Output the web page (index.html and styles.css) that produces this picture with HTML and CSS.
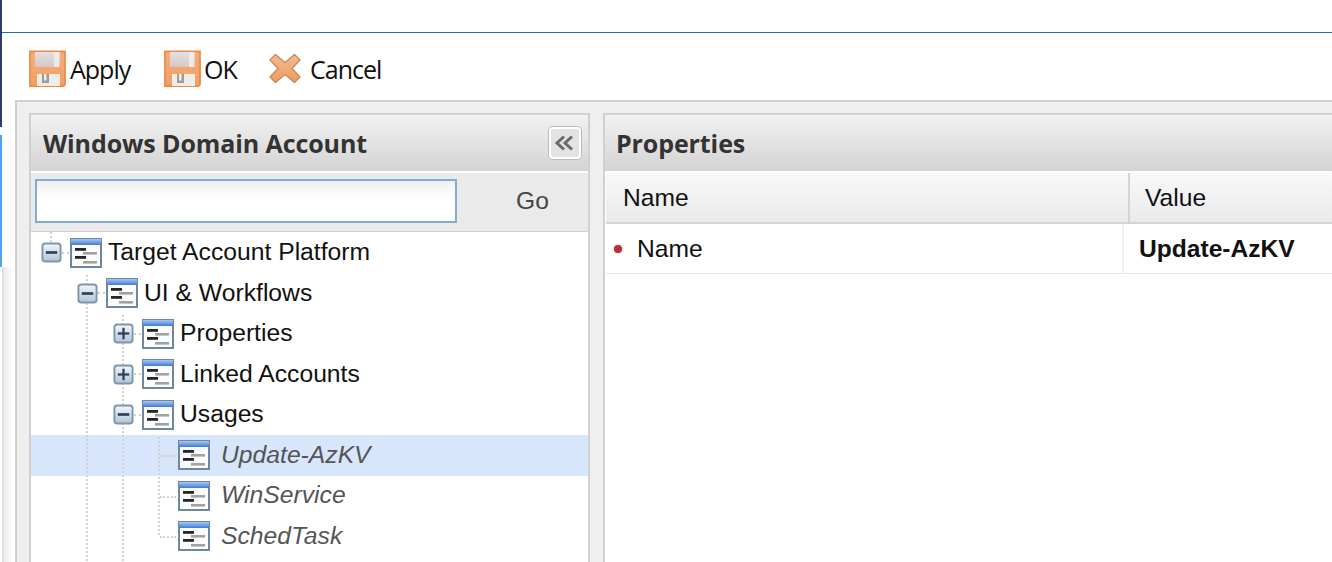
FILE: index.html
```html
<!DOCTYPE html>
<html lang="en">
<head>
<meta charset="utf-8">
<title>Windows Domain Account</title>
<link rel="stylesheet" href="styles.css">
</head>
<body>
<svg class="defs" width="0" height="0" aria-hidden="true">
  <defs>
    <linearGradient id="gTitle" x1="0" y1="0" x2="0" y2="1"><stop offset="0" stop-color="#a9c8f2"/><stop offset="1" stop-color="#3f7ad6"/></linearGradient>
    <linearGradient id="gBox" x1="0" y1="0" x2="0" y2="1"><stop offset="0" stop-color="#f0f4f8"/><stop offset="1" stop-color="#b4c6d8"/></linearGradient>
    <linearGradient id="gDisk" x1="0" y1="0" x2="0" y2="1"><stop offset="0" stop-color="#f5ad78"/><stop offset="1" stop-color="#f1a066"/></linearGradient>
    <linearGradient id="gPaper" x1="0" y1="0" x2="0" y2="1"><stop offset="0" stop-color="#e6dfdd"/><stop offset="1" stop-color="#d2cac9"/></linearGradient>
    <linearGradient id="gX" x1="0" y1="0" x2="0" y2="1"><stop offset="0" stop-color="#f5bb90"/><stop offset="1" stop-color="#eb9c62"/></linearGradient>
    <symbol id="i-form" viewBox="0 0 32 30">
      <rect x="0" y="0" width="32" height="30" fill="#6f869e"/>
      <rect x="2" y="1" width="28" height="27" fill="#fbfcfd"/>
      <rect x="1" y="1" width="30" height="6" fill="url(#gTitle)"/>
      <rect x="5" y="10" width="11" height="2.800" fill="#262626"/>
      <rect x="13" y="14" width="14" height="2.600" fill="#a2a2a2"/>
      <rect x="5" y="18" width="11" height="2.800" fill="#262626"/>
      <rect x="13" y="23" width="14" height="2.600" fill="#a2a2a2"/>
    </symbol>
    <symbol id="i-minus" viewBox="0 0 22 22">
      <rect x="0.500" y="0.500" width="21" height="21" rx="4" fill="#7f95ab"/>
      <rect x="2.500" y="2.500" width="17" height="17" rx="2" fill="url(#gBox)"/>
      <rect x="5" y="9.600" width="12" height="2.800" fill="#2c4258"/>
    </symbol>
    <symbol id="i-plus" viewBox="0 0 22 22">
      <rect x="0.500" y="0.500" width="21" height="21" rx="4" fill="#7f95ab"/>
      <rect x="2.500" y="2.500" width="17" height="17" rx="2" fill="url(#gBox)"/>
      <rect x="5" y="9.800" width="12" height="2.400" fill="#2c4258"/>
      <rect x="9.800" y="5" width="2.400" height="12" fill="#2c4258"/>
    </symbol>
    <symbol id="i-save" viewBox="0 0 37 37">
      <path d="M1 1.500h35v33l-1.500 1.500H1z" fill="url(#gDisk)" stroke="#e98d4c" stroke-width="1.800"/>
      <rect x="6" y="2" width="25" height="15" fill="url(#gPaper)"/>
      <rect x="25" y="2" width="5" height="15" fill="#efeae8"/>
      <rect x="8" y="24" width="23" height="12" fill="#f1ece6"/>
      <path d="M13 24v9h7v-9h-2.500v6.500H15V24z" fill="#a59a94"/>
    </symbol>
    <symbol id="i-cancel" viewBox="0 0 32 31">
      <path d="M6.500 1.500 16 9.500 25.500 1.500 31 7l-8 8.500 8 8.500-5.500 5.500L16 21.500 6.500 29.500 1 24l8-8.500L1 7z" fill="url(#gX)" stroke="#c98a5f" stroke-width="1.400" stroke-linejoin="round"/>
    </symbol>
  </defs>
</svg>

<div class="edge" aria-hidden="true"><span class="edge-dark"></span><span class="edge-blue"></span><span class="edge-shade"></span></div>
<div class="topbar"></div>

<main class="app">
  <nav class="toolbar">
    <button class="tool tool-apply"><svg class="ic-save"><use href="#i-save"/></svg><span>Apply</span></button>
    <button class="tool tool-ok"><svg class="ic-save"><use href="#i-save"/></svg><span>OK</span></button>
    <button class="tool tool-cancel"><svg class="ic-cancel"><use href="#i-cancel"/></svg><span>Cancel</span></button>
  </nav>

  <div class="workspace">
    <section class="panel tree-panel">
      <header class="panel-head">
        <h2>Windows Domain Account</h2>
        <button class="collapse" aria-label="Collapse">
          <svg width="22" height="16" viewBox="0 0 22 16"><path d="M10 1.500 3 8l7 6.500M18 1.500 11 8l7 6.500" fill="none" stroke="#6a6a6a" stroke-width="3"/></svg>
        </button>
      </header>
      <div class="search">
        <input class="search-input" type="text" aria-label="Search">
        <span class="go">Go</span>
      </div>
      <div class="tree">
        <i class="vline v1"></i><i class="vline v2"></i><i class="vline v3"></i><i class="vline v4"></i>
        <div class="row d0"><svg class="tog"><use href="#i-minus"/></svg><i class="dash"></i><svg class="form"><use href="#i-form"/></svg><span>Target Account Platform</span></div>
        <div class="row d1"><svg class="tog"><use href="#i-minus"/></svg><i class="dash"></i><svg class="form"><use href="#i-form"/></svg><span>UI &amp; Workflows</span></div>
        <div class="row d2"><svg class="tog"><use href="#i-plus"/></svg><i class="dash"></i><svg class="form"><use href="#i-form"/></svg><span>Properties</span></div>
        <div class="row d2"><svg class="tog"><use href="#i-plus"/></svg><i class="dash"></i><svg class="form"><use href="#i-form"/></svg><span>Linked Accounts</span></div>
        <div class="row d2"><svg class="tog"><use href="#i-minus"/></svg><i class="dash"></i><svg class="form"><use href="#i-form"/></svg><span>Usages</span></div>
        <div class="row leaf selected"><i class="dots"></i><svg class="form"><use href="#i-form"/></svg><span>Update-AzKV</span></div>
        <div class="row leaf"><i class="dots"></i><svg class="form"><use href="#i-form"/></svg><span>WinService</span></div>
        <div class="row leaf"><i class="dots"></i><svg class="form"><use href="#i-form"/></svg><span>SchedTask</span></div>
      </div>
    </section>

    <section class="panel props-panel">
      <header class="panel-head"><h2>Properties</h2></header>
      <div class="grid">
        <div class="grid-head">
          <div class="col-name">Name</div>
          <div class="col-value">Value</div>
        </div>
        <div class="grid-row">
          <div class="cell-name"><i class="req"></i>Name</div>
          <div class="cell-value">Update-AzKV</div>
        </div>
      </div>
    </section>
  </div>
</main>
</body>
</html>
```
FILE: styles.css
```css
* { box-sizing: border-box; }
html, body { margin: 0; height: 562px; overflow: hidden; background: #fff; }
body { position: relative; font-family: "Liberation Sans", Arial, sans-serif; color: #111; }
.defs { position: absolute; }

.edge { position: absolute; left: 0; top: 0; width: 15px; height: 562px; }
.edge-dark { position: absolute; left: 0; top: 0; width: 2px; height: 127px; background: #2f3a72; }
.edge-blue { position: absolute; left: 0; top: 135px; width: 2px; height: 132px; background: #4da3f5; }
.edge-shade { position: absolute; left: 2px; top: 267px; width: 13px; height: 295px; background: linear-gradient(90deg, #d9d9e2, #eeeef1 25%, #fafafa 70%, #fff); }

.topbar { height: 33px; margin-left: 2px; border-bottom: 1px solid #2a6da5; }
.app { margin-left: 2px; }

.toolbar { height: 67px; display: flex; align-items: center; padding: 4px 0 0 27px; }
.tool { display: flex; align-items: center; padding: 0; border: 0; background: none; color: #111; font: 400 25px/1 "Open Sans", sans-serif; letter-spacing: -1px; }
.tool span { position: relative; top: 1px; }
.tool-apply { width: 135px; gap: 4px; }
.tool-ok { width: 105px; gap: 3px; }
.tool-cancel { gap: 9px; }
.ic-save { width: 37px; height: 37px; }
.ic-cancel { width: 32px; height: 31px; }

.workspace { margin-left: 13px; height: 462px; display: flex; gap: 13px; padding: 11px 0 0 12px; background: #efefef; border-top: 2px solid #cfcfcf; border-left: 2px solid #cfcfcf; }
.panel { background: #fff; border: 2px solid #d0d0d0; border-bottom: 0; }
.tree-panel { width: 561px; flex: none; }
.props-panel { flex: 1; min-width: 0; border-right: 0; background: #fff; }

.panel-head { height: 56px; display: flex; align-items: center; justify-content: space-between; padding: 0 7px 0 11px; background: linear-gradient(#f2f2f2, #d3d3d3); }
.tree-panel .panel-head { padding-left: 12px; }
.panel-head h2 { margin: 0; font: 700 25px/1 "Open Sans", sans-serif; color: #333; letter-spacing: -0.1px; }
.collapse { width: 32px; height: 32px; display: flex; align-items: center; justify-content: center; padding: 0; background: #e3e3e3; border: 2px solid #fff; border-radius: 4px; box-shadow: 0 0 0 1px #bbb; }

.search { height: 61px; display: flex; align-items: center; padding: 0 3px 2px 4px; background: #eaeaea; border-top: 2px solid #fff; border-bottom: 1px solid #d0d0d0; }
.search-input { width: 422px; height: 44px; flex: none; border: 2px solid #82add0; background: linear-gradient(#f0f0f0, #fff 45%); outline: 0; }
.go { margin-left: 59px; font-size: 24.600px; color: #444; }

.tree { position: relative; height: 330px; padding-top: 0.500px; background: #fff; }
.row { position: relative; height: 40.500px; display: flex; align-items: center; font-size: 24.700px; white-space: nowrap; color: #111; }
.row span { line-height: 1; }
.tog { position: relative; z-index: 2; width: 21px; height: 21px; flex: none; }
.form { width: 32px; height: 30px; flex: none; }
.dash { width: 7px; flex: none; margin-right: 1px; border-top: 2px dotted #d2d2d2; }
.d0 { padding-left: 10px; }
.d1 { padding-left: 46px; }
.d2 { padding-left: 82px; }
.d0 span, .d1 span, .d2 span { margin-left: 6px; }
.leaf { padding-left: 147px; color: #555; font-style: italic; }
.leaf span { margin-left: 11px; }
.selected { background: #d7e6fa; }
.dots { position: absolute; left: 129px; width: 16px; top: 50%; border-top: 2px dotted #d2d2d2; }

.vline { position: absolute; width: 0; border-left: 2px dotted #d2d2d2; z-index: 1; }
.v1 { left: 19px; top: 0; height: 10px; }
.v2 { left: 55px; top: 43px; height: 290px; }
.v3 { left: 91px; top: 83px; height: 250px; }
.v4 { left: 127px; top: 205px; height: 98px; }

.grid { padding: 2px 0 0 1px; background: #fff; }
.grid-head { height: 51px; display: flex; background: linear-gradient(#f8f8f8, #e9eaec); border-bottom: 2px solid #d4d4d4; font-size: 24.600px; color: #111; }
.col-name { width: 524px; padding-left: 17px; display: flex; align-items: center; border-right: 2px solid #d4d4d4; }
.col-value { padding-left: 15px; display: flex; align-items: center; }
.grid-row { height: 50px; display: flex; border-bottom: 1px solid #e6e6e6; font-size: 24.600px; }
.cell-name { width: 518px; display: flex; align-items: center; padding-left: 8px; border-right: 2px solid #f0f0f0; color: #111; }
.req { width: 8px; height: 8px; border-radius: 50%; background: #b5323c; margin-right: 15px; box-shadow: 0 0 2px #d98a90; }
.cell-value { padding-left: 15px; display: flex; align-items: center; font-weight: 700; }
```
